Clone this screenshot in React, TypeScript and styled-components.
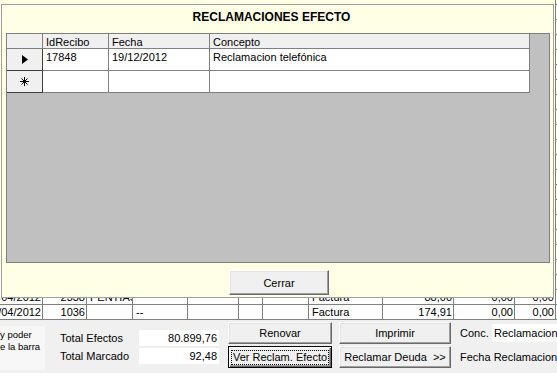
import React from "react";
import styled, { createGlobalStyle, css } from "styled-components";

const GlobalStyle = createGlobalStyle`
  html, body {
    margin: 0;
    padding: 0;
  }
  body {
    width: 557px;
    height: 373px;
    overflow: hidden;
    background: #f0f0f0;
    font-family: "Liberation Sans", Arial, sans-serif;
    font-size: 11px;
    color: #000;
  }
`;

const Screen = styled.div`
  position: relative;
  width: 557px;
  height: 373px;
  overflow: hidden;
  display: flex;
  flex-direction: column;
`;

/* underlying datasheet of the main form */
const Sheet = styled.div`
  flex: none;
  height: 320px;
  display: flex;
  flex-direction: column;
  justify-content: flex-end;
  overflow: hidden;
`;

const SheetRow = styled.div`
  flex: none;
  display: flex;
  height: 15px;
`;

const SheetCell = styled.div<{ $w: number; $right?: boolean }>`
  flex: none;
  width: ${(p) => p.$w}px;
  height: 15px;
  box-sizing: border-box;
  border-right: 1px solid #808080;
  border-bottom: 1px solid #808080;
  background: #fff;
  display: flex;
  align-items: center;
  justify-content: ${(p) => (p.$right ? "flex-end" : "flex-start")};
  padding: ${(p) => (p.$right ? "0 1px 0 0" : "0 0 0 3px")};
  line-height: 14px;
  white-space: nowrap;
  overflow: hidden;
`;

/* popup dialog */
const Dialog = styled.div`
  position: absolute;
  left: 0;
  top: 0;
  width: 555px;
  height: 298px;
  box-sizing: border-box;
  padding: 4px 1px 0 1px;
  background: #ffffe6;
`;

const Frame = styled.div`
  height: 100%;
  box-sizing: border-box;
  border: 1px solid #a0a0a0;
  display: flex;
  flex-direction: column;
`;

const Title = styled.div`
  flex: none;
  height: 28px;
  box-sizing: border-box;
  padding: 5px 12px 0 0;
  text-align: center;
  font-size: 12px;
  font-weight: bold;
  line-height: 14px;
`;

const Grid = styled.div`
  flex: none;
  height: 230px;
  margin: 0 3px 0 4px;
  box-sizing: border-box;
  border: 1px solid #808080;
  background: #c0c0c0;
`;

const GridRow = styled.div<{ $h: number }>`
  display: flex;
  height: ${(p) => p.$h}px;
`;

const GridCell = styled.div<{ $w: number; $head?: boolean }>`
  flex: none;
  width: ${(p) => p.$w}px;
  box-sizing: border-box;
  border-right: 1px solid #808080;
  border-bottom: 1px solid #808080;
  background: ${(p) => (p.$head ? "#f0f0f0" : "#fff")};
  padding: 1px 2px 0 3px;
  line-height: 14px;
  white-space: nowrap;
  overflow: hidden;
`;

const Selector = styled.div`
  flex: none;
  width: 36px;
  box-sizing: border-box;
  border-right: 1px solid #404040;
  border-bottom: 1px solid #404040;
  background: #f0f0f0;
  display: flex;
  align-items: center;
  justify-content: center;
`;

const DialogFooter = styled.div`
  flex: 1;
  display: flex;
  justify-content: center;
  align-items: flex-start;
  padding: 7px 0 0 3px;
`;

const Button = styled.button<{ $w: number; $h: number; $default?: boolean }>`
  flex: none;
  width: ${(p) => p.$w}px;
  height: ${(p) => p.$h}px;
  box-sizing: border-box;
  margin: 0;
  padding: 0;
  font-family: inherit;
  font-size: 11px;
  color: #000;
  background: #f0f0f0;
  border: 1px solid;
  border-color: #fff #696969 #696969 #fff;
  box-shadow: inset -1px -1px #a0a0a0, inset 1px 1px #e3e3e3;
  white-space: pre;
  display: flex;
  align-items: center;
  justify-content: center;
  ${(p) =>
    p.$default &&
    css`
      border-color: #000;
      box-shadow: inset 1px 1px #fff, inset -1px -1px #696969,
        inset -2px -2px #a0a0a0;
    `}
`;

const FocusText = styled.span`
  border: 1px dotted #000;
  padding: 0 1px;
  line-height: 13px;
`;

/* bottom bar of the main form */
const Panel = styled.div`
  flex: 1;
  display: flex;
  align-items: flex-start;
`;

const Note = styled.div`
  flex: none;
  width: 45px;
  height: 44px;
  margin-top: 6px;
  box-sizing: border-box;
  padding-top: 3px;
  background: #f7f7f7;
  font-size: 9.5px;
  line-height: 12px;
  white-space: nowrap;
  overflow: hidden;
`;

const Totals = styled.div`
  flex: none;
  margin: 10px 0 0 15px;
  display: grid;
  grid-template-columns: 79px 80px;
  row-gap: 2px;
`;

const TotalLabel = styled.div`
  height: 16px;
  line-height: 16px;
`;

const TotalValue = styled.div`
  height: 16px;
  line-height: 16px;
  background: #fff;
  text-align: right;
  padding-right: 2px;
`;

const ButtonColumn = styled.div<{ $ml: number }>`
  flex: none;
  margin: 2px 0 0 ${(p) => p.$ml}px;
  display: flex;
  flex-direction: column;
  gap: 2px;
`;

const InfoColumn = styled.div`
  flex: none;
  margin: 4px 0 0 9px;
  display: flex;
  flex-direction: column;
`;

const InfoRow = styled.div`
  display: flex;
  align-items: center;
  height: 18px;
`;

const InfoLabel = styled.div<{ $w?: number }>`
  flex: none;
  width: ${(p) => (p.$w ? `${p.$w}px` : "auto")};
  line-height: 14px;
  white-space: nowrap;
`;

const InfoBox = styled.div`
  flex: none;
  width: 80px;
  height: 18px;
  line-height: 18px;
  box-sizing: border-box;
  padding-left: 2px;
  background: #fff;
  white-space: nowrap;
`;

const LowerLabel = styled(InfoLabel)`
  margin-top: 8px;
`;

const sheetCols = [
  { w: 43, right: true },
  { w: 44, right: true },
  { w: 46 },
  { w: 55 },
  { w: 51 },
  { w: 24 },
  { w: 46 },
  { w: 74 },
  { w: 71, right: true },
  { w: 61, right: true },
  { w: 41, right: true },
  { w: 60 },
];

const sheetRows: string[][] = [
  ...Array.from({ length: 20 }, () => sheetCols.map(() => "")),
  ["11/04/2012", "2338", "PENTIAS", "", "", "", "", "Factura", "88,00", "0,00", "0,00", ""],
  ["12/04/2012", "1036", "", "--", "", "", "", "Factura", "174,91", "0,00", "0,00", ""],
];

const gridCols = [
  { key: "id", title: "IdRecibo", w: 66 },
  { key: "fecha", title: "Fecha", w: 101 },
  { key: "concepto", title: "Concepto", w: 320 },
];

const reclamaciones = [
  { id: "17848", fecha: "19/12/2012", concepto: "Reclamacion telefónica" },
];

const CurrentIcon = () => (
  <svg width="6" height="9" viewBox="0 0 6 9">
    <polygon points="0,0 6,4.5 0,9" fill="#000" />
  </svg>
);

const NewIcon = () => (
  <svg width="9" height="9" viewBox="0 0 9 9" stroke="#000" strokeWidth="1">
    <line x1="4.5" y1="0" x2="4.5" y2="9" />
    <line x1="0" y1="4.5" x2="9" y2="4.5" />
    <line x1="1.5" y1="1.5" x2="7.5" y2="7.5" />
    <line x1="7.5" y1="1.5" x2="1.5" y2="7.5" />
  </svg>
);

export default function App() {
  return (
    <>
      <GlobalStyle />
      <Screen>
        <Sheet>
          {sheetRows.map((row, i) => (
            <SheetRow key={i}>
              {sheetCols.map((c, j) => (
                <SheetCell key={j} $w={c.w} $right={c.right}>
                  {row[j]}
                </SheetCell>
              ))}
            </SheetRow>
          ))}
        </Sheet>

        <Panel>
          <Note>
            y poder
            <br />
            e la barra
          </Note>
          <Totals>
            <TotalLabel>Total Efectos</TotalLabel>
            <TotalValue>80.899,76</TotalValue>
            <TotalLabel>Total Marcado</TotalLabel>
            <TotalValue>92,48</TotalValue>
          </Totals>
          <ButtonColumn $ml={9}>
            <Button $w={104} $h={22}>Renovar</Button>
            <Button $w={104} $h={22} $default>
              <FocusText>Ver Reclam. Efecto</FocusText>
            </Button>
          </ButtonColumn>
          <ButtonColumn $ml={7}>
            <Button $w={112} $h={22}>Imprimir</Button>
            <Button $w={112} $h={22}>{"Reclamar Deuda  >>"}</Button>
          </ButtonColumn>
          <InfoColumn>
            <InfoRow>
              <InfoLabel $w={32}>Conc.</InfoLabel>
              <InfoBox>Reclamacion</InfoBox>
            </InfoRow>
            <LowerLabel>Fecha Reclamacion</LowerLabel>
          </InfoColumn>
        </Panel>

        <Dialog>
          <Frame>
            <Title>RECLAMACIONES EFECTO</Title>
            <Grid>
              <GridRow $h={15}>
                <GridCell $w={36} $head />
                {gridCols.map((c) => (
                  <GridCell key={c.key} $w={c.w} $head>
                    {c.title}
                  </GridCell>
                ))}
              </GridRow>
              {reclamaciones.map((r) => (
                <GridRow key={r.id} $h={22}>
                  <Selector>
                    <CurrentIcon />
                  </Selector>
                  <GridCell $w={66}>{r.id}</GridCell>
                  <GridCell $w={101}>{r.fecha}</GridCell>
                  <GridCell $w={320}>{r.concepto}</GridCell>
                </GridRow>
              ))}
              <GridRow $h={22}>
                <Selector>
                  <NewIcon />
                </Selector>
                {gridCols.map((c) => (
                  <GridCell key={c.key} $w={c.w} />
                ))}
              </GridRow>
            </Grid>
            <DialogFooter>
              <Button $w={100} $h={25}>Cerrar</Button>
            </DialogFooter>
          </Frame>
        </Dialog>
      </Screen>
    </>
  );
}
